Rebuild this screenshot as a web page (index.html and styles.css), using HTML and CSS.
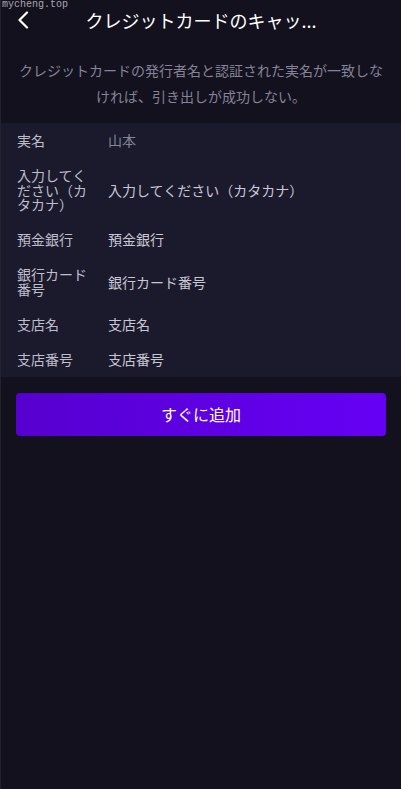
FILE: index.html
```html
<!DOCTYPE html>
<html lang="ja">
<head>
<meta charset="utf-8">
<title>クレジットカード</title>
<link rel="stylesheet" href="styles.css">
</head>
<body>
<div class="page">
  <div class="watermark">mycheng.top</div>
  <header class="nav">
    <span class="back">
      <svg width="14" height="18" viewBox="0 0 14 18"><path d="M11 1.5 L3.5 9 L11 16.5" fill="none" stroke="#fff" stroke-width="2.2" stroke-linecap="round" stroke-linejoin="round"/></svg>
    </span>
    <h1 class="title">クレジットカードのキャッ...</h1>
  </header>
  <p class="notice">クレジットカードの発行者名と認証された実名が一致しなければ、引き出しが成功しない。</p>
  <div class="form">
    <div class="row"><div class="label">実名</div><div class="value dim">山本</div></div>
    <div class="row"><div class="label">入力してください（カタカナ）</div><div class="value">入力してください（カタカナ）</div></div>
    <div class="row"><div class="label">預金銀行</div><div class="value">預金銀行</div></div>
    <div class="row"><div class="label">銀行カード番号</div><div class="value">銀行カード番号</div></div>
    <div class="row"><div class="label">支店名</div><div class="value">支店名</div></div>
    <div class="row"><div class="label">支店番号</div><div class="value">支店番号</div></div>
  </div>
  <div class="actions">
    <button class="submit">すぐに追加</button>
  </div>
</div>
</body>
</html>
```
FILE: styles.css
```css
html, body {
  margin: 0;
  padding: 0;
  background: #13111e;
}
body {
  font-family: "Noto Sans CJK JP", "Noto Sans", sans-serif;
}
.page {
  position: relative;
  min-height: 789px;
  background: #13111e;
  border-left: 1px solid #24222e;
  box-sizing: border-box;
}
.watermark {
  position: absolute;
  left: 1px;
  top: -1px;
  font-family: "Liberation Mono", "DejaVu Sans Mono", monospace;
  font-size: 10px;
  line-height: 12px;
  color: #a9a7b0;
}
.nav {
  height: 40px;
  display: flex;
  align-items: center;
  justify-content: center;
  position: relative;
}
.back {
  position: absolute;
  left: 15px;
  top: 11px;
  width: 14px;
  height: 18px;
  display: flex;
}
.title {
  margin: 0;
  font-size: 18px;
  font-weight: 400;
  color: #ffffff;
}
.notice {
  margin: 0;
  padding: 17px 14px 14px;
  text-align: center;
  font-size: 14px;
  line-height: 26px;
  color: #858397;
}
.form {
  background: #1b1a2d;
  display: flex;
  flex-direction: column;
}
.row {
  display: flex;
  align-items: center;
  padding: 10.25px 16px;
  font-size: 14px;
  line-height: 14.5px;
}
.label {
  width: 72px;
  flex: none;
  margin-right: 19px;
  color: #bfbdca;
}
.value {
  flex: 1;
  color: #c9c7d3;
}
.value.dim {
  color: #858397;
}
.actions {
  padding: 16px 15px;
}
.submit {
  display: block;
  width: 100%;
  height: 43px;
  border: none;
  border-radius: 4px;
  background: linear-gradient(90deg, #5600cf 0%, #6600f5 100%);
  color: #ffffff;
  font-family: "Noto Sans CJK JP", "Noto Sans", sans-serif;
  font-size: 16px;
}
```
